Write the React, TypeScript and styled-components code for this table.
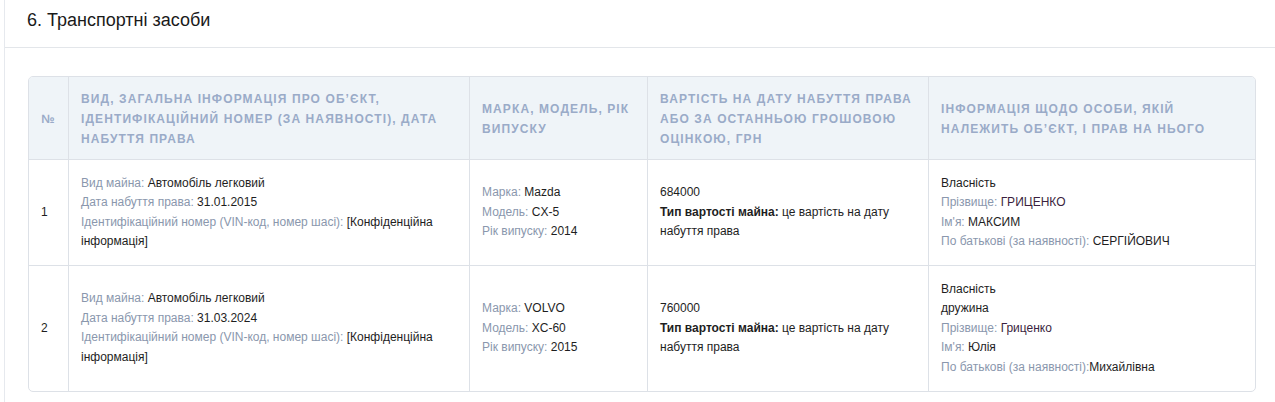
import styled, { createGlobalStyle } from 'styled-components';

const GlobalStyle = createGlobalStyle`
  body {
    margin: 0;
    background: #fff;
    font-family: "Liberation Sans", Arial, sans-serif;
    color: #222;
  }
`;

const Card = styled.section`
  margin-left: 4px;
  border-left: 1px solid #e6e9ee;
  min-height: 402px;
`;

const CardHeader = styled.header`
  height: 48px;
  box-sizing: border-box;
  padding: 8px 22px 0;
  border-bottom: 1px solid #e3e6ea;
`;

const Title = styled.h2`
  margin: 0;
  font-size: 18px;
  font-weight: 400;
  line-height: 24px;
  color: #1a1a1a;
`;

const CardBody = styled.div`
  padding: 28px 19px 0 23px;
`;

const Table = styled.table`
  width: 100%;
  table-layout: fixed;
  border-collapse: separate;
  border-spacing: 0;
  border: 1px solid #dde1e7;
  border-radius: 5px;
  overflow: hidden;
  font-size: 12px;
  line-height: 19.5px;
`;

const Th = styled.th<{ $center?: boolean }>`
  background: #eff4f8;
  color: #9aabc8;
  font-weight: 700;
  font-size: 12px;
  letter-spacing: 1.1px;
  text-transform: uppercase;
  text-align: ${(p) => (p.$center ? 'center' : 'left')};
  vertical-align: middle;
  padding: 12px 12px 10px 12px;
  line-height: 20px;
  border-left: 1px solid #dde1e7;
  &:first-child {
    border-left: none;
  }
`;

const Td = styled.td`
  vertical-align: middle;
  padding: 13.5px 12px;
  border-top: 1px solid #dde1e7;
  border-left: 1px solid #dde1e7;
  color: #1e1e1e;
  &:first-child {
    border-left: none;
  }
`;

const Line = styled.div``;

const Label = styled.span`
  color: #8a97ad;
`;

const Bold = styled.b`
  font-weight: 700;
`;

const Name = styled.span`
  color: #3b1f40;
`;

interface ICar {
  id: number;
  date: string;
  brand: string;
  model: string;
  year: string;
  cost: string;
}

const cars: ICar[] = [
  { id: 1, date: '31.01.2015', brand: 'Mazda', model: 'CX-5', year: '2014', cost: '684000' },
  { id: 2, date: '31.03.2024', brand: 'VOLVO', model: 'XC-60', year: '2015', cost: '760000' },
];

const App = () => {
  return (
    <>
      <GlobalStyle />
      <Card>
        <CardHeader>
          <Title>6. Транспортні засоби</Title>
        </CardHeader>
        <CardBody>
          <Table>
            <colgroup>
              <col style={{ width: 39 }} />
              <col style={{ width: 401 }} />
              <col style={{ width: 178 }} />
              <col style={{ width: 281 }} />
              <col />
            </colgroup>
            <thead>
              <tr>
                <Th $center>№</Th>
                <Th>Вид, загальна інформація про об’єкт, ідентифікаційний номер (за наявності), дата набуття права</Th>
                <Th>Марка, модель, рік випуску</Th>
                <Th>Вартість на дату набуття права або за останньою грошовою оцінкою, грн</Th>
                <Th>Інформація щодо особи, якій належить об’єкт, і прав на нього</Th>
              </tr>
            </thead>
            <tbody>
              {cars.map((car) => (
                <tr key={car.id}>
                  <Td>{car.id}</Td>
                  <Td>
                    <Line>
                      <Label>Вид майна: </Label>Автомобіль легковий
                    </Line>
                    <Line>
                      <Label>Дата набуття права: </Label>
                      {car.date}
                    </Line>
                    <Line>
                      <Label>Ідентифікаційний номер (VIN-код, номер шасі): </Label>[Конфіденційна інформація]
                    </Line>
                  </Td>
                  <Td>
                    <Line>
                      <Label>Марка: </Label>
                      {car.brand}
                    </Line>
                    <Line>
                      <Label>Модель: </Label>
                      {car.model}
                    </Line>
                    <Line>
                      <Label>Рік випуску: </Label>
                      {car.year}
                    </Line>
                  </Td>
                  <Td>
                    <Line>{car.cost}</Line>
                    <Line>
                      <Bold>Тип вартості майна:</Bold> це вартість на дату набуття права
                    </Line>
                  </Td>
                  <Td>
                    {car.id === 1 ? (
                      <>
                        <Line>Власність</Line>
                        <Line>
                          <Label>Прізвище: </Label>
                          <Name>ГРИЦЕНКО</Name>
                        </Line>
                        <Line>
                          <Label>Ім'я: </Label>МАКСИМ
                        </Line>
                        <Line>
                          <Label>По батькові (за наявності): </Label>СЕРГІЙОВИЧ
                        </Line>
                      </>
                    ) : (
                      <>
                        <Line>Власність</Line>
                        <Line>дружина</Line>
                        <Line>
                          <Label>Прізвище: </Label>
                          <Name>Гриценко</Name>
                        </Line>
                        <Line>
                          <Label>Ім'я: </Label>Юлія
                        </Line>
                        <Line>
                          <Label>По батькові (за наявності):</Label>Михайлівна
                        </Line>
                      </>
                    )}
                  </Td>
                </tr>
              ))}
            </tbody>
          </Table>
        </CardBody>
      </Card>
    </>
  );
};

export default App;
